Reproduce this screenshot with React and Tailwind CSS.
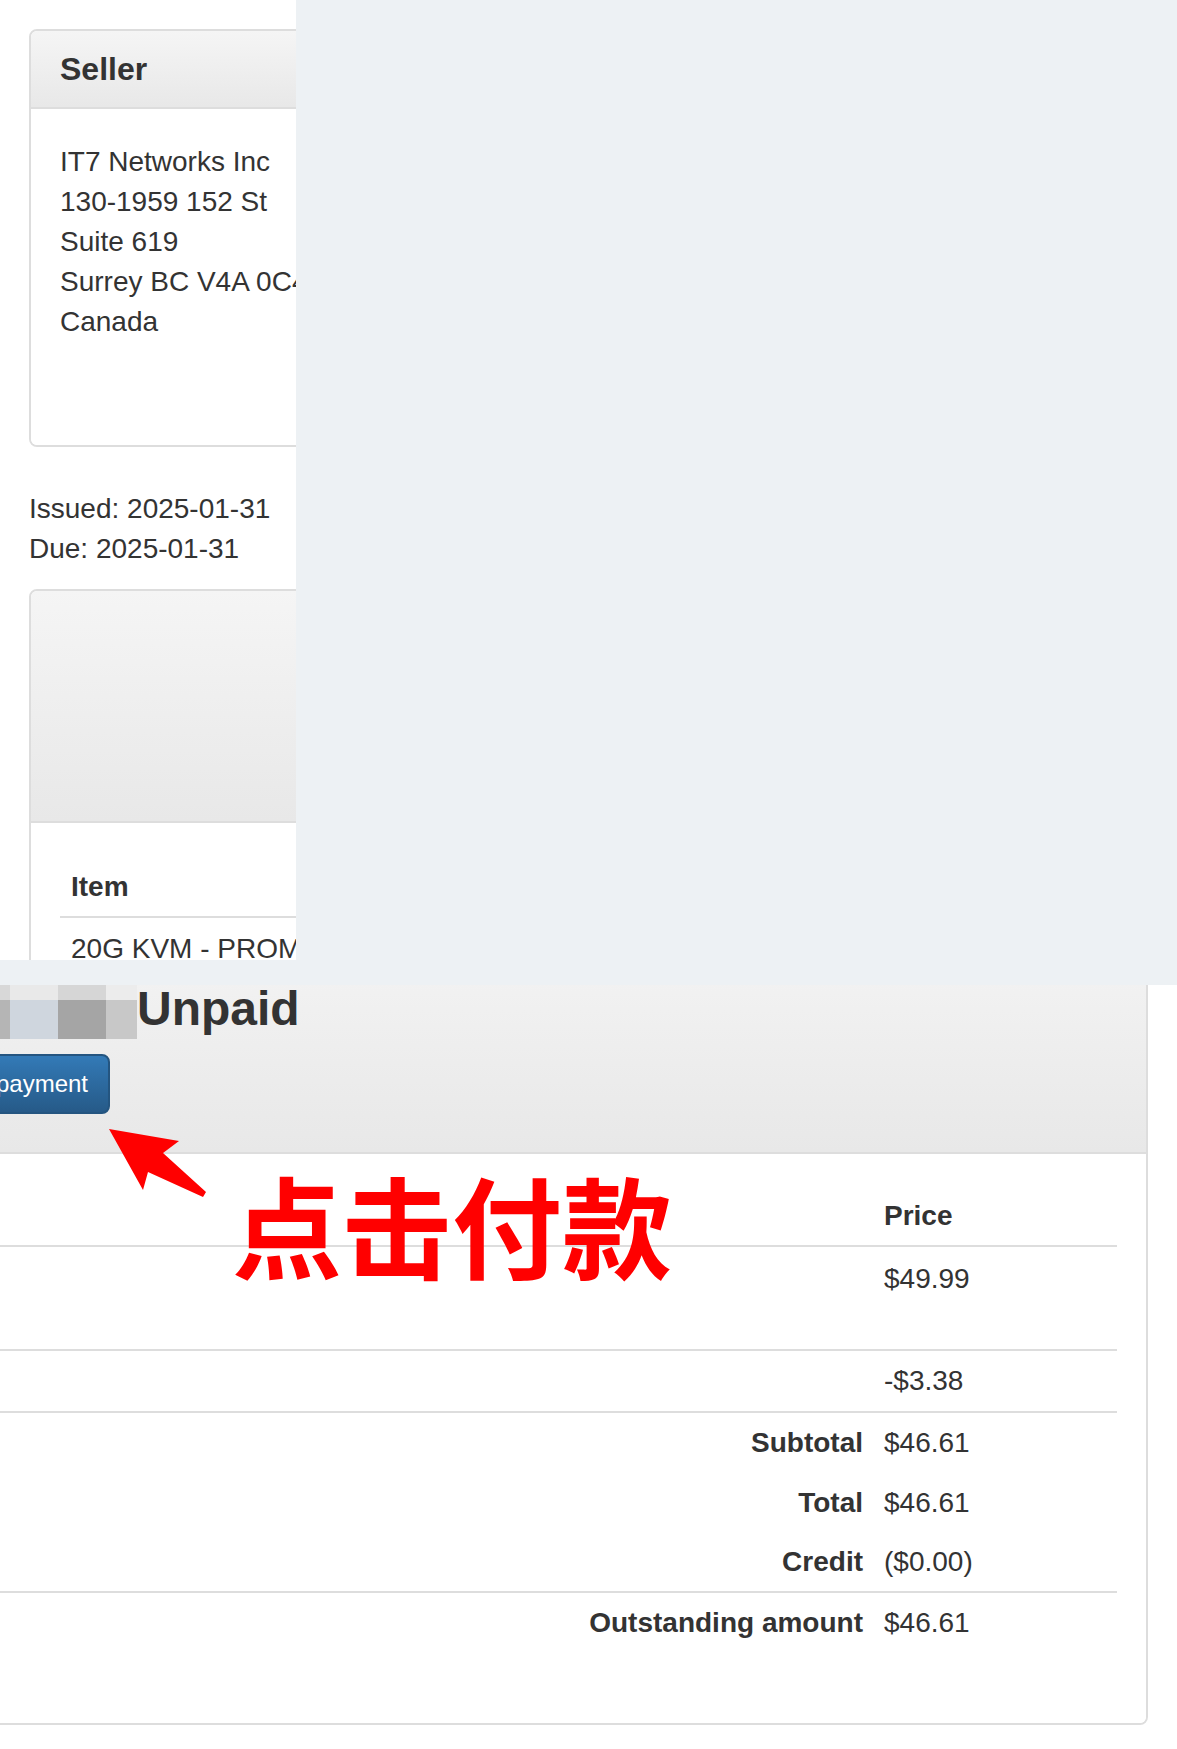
const pixelTop = ['bg-[#d8d8d8]', 'bg-[#e9e9e9]', 'bg-[#d6d6d6]', 'bg-[#ececec]'];
const pixelBottom = ['bg-[#b5b5b5]', 'bg-[#cfd6de]', 'bg-[#a5a5a5]', 'bg-[#c8c8c8]'];
const pixelWidths = ['w-[48px]', 'w-[48px]', 'w-[48px]', 'w-[31px]'];

const seller = ['IT7 Networks Inc', '130-1959 152 St', 'Suite 619', 'Surrey BC V4A 0C4', 'Canada'];

const totals = [
    { label: 'Subtotal', value: '$46.61' },
    { label: 'Total', value: '$46.61' },
    { label: 'Credit', value: '($0.00)' },
];

const Redacted = () => (
    <div className="flex">
        {pixelWidths.map((w, i) => (
            <div key={i} className={`flex flex-col ${w}`}>
                <div className={`h-[18px] ${pixelTop[i]}`} />
                <div className={`h-[39px] ${pixelBottom[i]}`} />
            </div>
        ))}
    </div>
);

const TotalRow = ({ label, value, border }) => (
    <div className={`flex h-[60px] items-center ${border ? 'border-b-2 border-[#dddddd]' : ''}`}>
        <div className="flex-1 text-right pr-[7px] font-bold">{label}</div>
        <div className="w-[247px] pl-[14px]">{value}</div>
    </div>
);

export default function App() {
    return (
        <div className="relative w-[1177px] h-[1749px] overflow-hidden bg-white text-[#333333] font-['Liberation_Sans',Arial,sans-serif] text-[28px] leading-[40px]">
            {/* upper capture */}
            <div className="flex h-[960px]">
                <div className="w-[296px] overflow-hidden bg-white">
                    <div className="w-[1177px] pl-[29px] pt-[29px]">
                        <div className="w-[540px] border-2 border-[#dddddd] rounded-[8px] overflow-hidden">
                            <div className="h-[78px] flex items-center px-[29px] bg-gradient-to-b from-[#f5f5f5] to-[#e8e8e8] border-b-2 border-[#dddddd]">
                                <h3 className="text-[32px] font-bold leading-[36px]">Seller</h3>
                            </div>
                            <div className="h-[336px] px-[29px] pt-[33px] bg-white">
                                {seller.map((l) => (
                                    <div key={l} className="whitespace-nowrap">{l}</div>
                                ))}
                            </div>
                        </div>
                        <div className="mt-[42px]">Issued: 2025-01-31</div>
                        <div>Due: 2025-01-31</div>
                        <div className="mt-[20px] w-[1119px] border-2 border-[#dddddd] rounded-t-[8px] overflow-hidden">
                            <div className="h-[232px] bg-gradient-to-b from-[#f5f5f5] to-[#e8e8e8] border-b-2 border-[#dddddd]" />
                            <div className="px-[29px] pt-[35px] bg-white">
                                <div className="h-[60px] flex items-center px-[11px] font-bold border-b-2 border-[#dddddd]">Item</div>
                                <div className="pt-[11px] px-[11px] whitespace-nowrap">20G KVM - PROMO</div>
                            </div>
                        </div>
                    </div>
                </div>
                <div className="flex-1 bg-[#edf1f4]" />
            </div>
            <div className="h-[25px] bg-[#edf1f4]" />

            {/* lower capture */}
            <div className="h-[764px] overflow-hidden bg-white pr-[29px]">
                <div className="ml-[-200px] mt-[-65px] border-2 border-[#dddddd] rounded-[8px] overflow-hidden">
                    <div className="h-[232px] bg-gradient-to-b from-[#f5f5f5] to-[#e8e8e8] border-b-2 border-[#dddddd] pt-[60px]">
                        <div className="flex items-start pl-[160px]">
                            <Redacted />
                            <h3 className="text-[48px] font-bold leading-[53px]">Unpaid</h3>
                        </div>
                        <div className="mt-[15px] w-[308px] flex justify-end">
                            <button className="h-[60px] flex items-center whitespace-nowrap pl-[22px] pr-[20px] text-[24px] text-white border-2 border-[#245580] rounded-[8px] bg-gradient-to-b from-[#337ab7] to-[#265a88]">
                                Make payment
                            </button>
                        </div>
                    </div>
                    <div className="px-[29px] pt-[33px] pb-[70px] bg-white">
                        <div className="flex h-[60px] items-center border-b-2 border-[#dddddd] font-bold">
                            <div className="flex-1" />
                            <div className="w-[247px] pl-[14px]">Price</div>
                        </div>
                        <div className="flex h-[104px] pt-[12px] border-b-2 border-[#dddddd]">
                            <div className="flex-1" />
                            <div className="w-[247px] pl-[14px]">$49.99</div>
                        </div>
                        <div className="flex h-[62px] items-center border-b-2 border-[#dddddd]">
                            <div className="flex-1" />
                            <div className="w-[247px] pl-[14px]">-$3.38</div>
                        </div>
                        {totals.map((t, i) => (
                            <TotalRow key={t.label} label={t.label} value={t.value} border={i === totals.length - 1} />
                        ))}
                        <TotalRow label="Outstanding amount" value="$46.61" />
                    </div>
                </div>
            </div>

            {/* annotation */}
            <svg className="absolute left-[100px] top-[1120px] w-[115px] h-[85px]" viewBox="0 0 115 85">
                <polygon points="9,9 79,21 63,33 106,72 103,77 48,52 43,70" fill="#ff0000" />
            </svg>
            <div className="absolute left-[232px] top-[1168px] text-[110px] leading-[110px] font-bold text-[#ff0000] whitespace-nowrap font-['Noto_Sans_CJK_SC','Noto_Sans_CJK_JP',sans-serif]">
                点击付款
            </div>
        </div>
    );
}
